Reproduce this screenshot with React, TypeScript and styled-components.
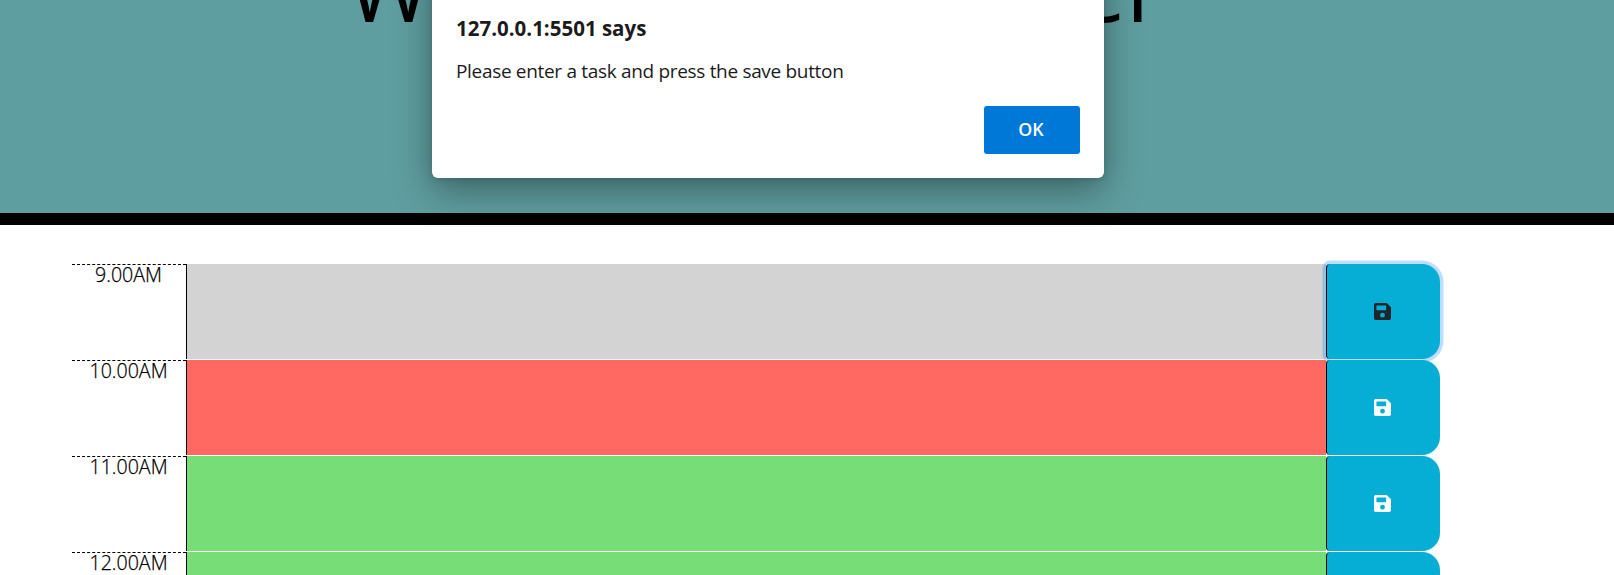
import React from "react";
import styled, { createGlobalStyle } from "styled-components";

const GlobalStyle = createGlobalStyle`
  *, *::before, *::after { box-sizing: border-box; }
  html, body { margin: 0; height: 100%; overflow: hidden; background: #fff; }
`;

const Page = styled.div`
  height: 575px;
  overflow: hidden;
  font-family: "Open Sans", "Noto Sans", sans-serif;
  color: #000;
`;

const Header = styled.header`
  display: flex;
  align-items: flex-end;
  height: 225px;
  padding: 0 0 188px 347px;
  overflow: hidden;
  background: #5f9ea0;
  border-bottom: 12px solid #000;
`;

const Title = styled.h1`
  margin: 0;
  font-size: 91px;
  font-weight: 400;
  line-height: 76px;
  word-spacing: -20px;
  white-space: nowrap;
`;

const Planner = styled.main`
  width: 1368px;
  margin: 39px 0 0 72px;
`;

const HourRow = styled.section`
  display: grid;
  grid-template-columns: 114px 1140px 114px;
  height: 96px;
`;

const Hour = styled.div`
  height: 96px;
  padding-right: 1px;
  border-top: 1px dashed #000;
  font-size: 19.6px;
  font-weight: 300;
  -webkit-text-stroke: 0.25px #000;
  line-height: 20px;
  text-align: center;
`;

const slotColors = { past: "#d3d3d3", present: "#ff6961", future: "#77dd77" };
type Phase = keyof typeof slotColors;

const Slot = styled.div<{ $phase: Phase }>`
  height: 95px;
  border-left: 1px solid #000;
  background: ${(p) => slotColors[p.$phase]};
`;

const SaveButton = styled.button<{ $focused: boolean }>`
  display: flex;
  align-items: center;
  justify-content: center;
  width: 114px;
  height: 95px;
  padding: 0 3px 0 0;
  border: 0;
  border-left: 1px solid #000;
  border-radius: 4px 18px 18px 4px;
  background: #06aed5;
  color: ${(p) => (p.$focused ? "#212529" : "#fff")};
  box-shadow: ${(p) => (p.$focused ? "0 0 0 3.5px rgba(0, 123, 255, 0.25)" : "none")};
`;

const Dialog = styled.div`
  position: absolute;
  top: -40px;
  left: 432px;
  display: flex;
  flex-direction: column;
  width: 672px;
  height: 218px;
  padding: 54px 24px 24px;
  border-radius: 6px;
  background: #fff;
  box-shadow: 0 12px 38px rgba(0, 0, 0, 0.38), 0 2px 6px rgba(0, 0, 0, 0.12);
  color: #1b1b1b;
`;

const DialogTitle = styled.h2`
  margin: 0;
  font-size: 20.5px;
  font-weight: 700;
  line-height: 28px;
  white-space: nowrap;
`;

const DialogText = styled.p`
  margin: 15px 0 0;
  font-size: 19px;
  letter-spacing: -0.32px;
  line-height: 28px;
  white-space: nowrap;
`;

const OkButton = styled.button`
  align-self: flex-end;
  width: 96px;
  height: 48px;
  margin-top: auto;
  padding: 0 2px 2px 0;
  border: 0;
  border-radius: 3px;
  background: #0078d7;
  color: #fff;
  font: 600 17.8px "Open Sans", "Noto Sans", sans-serif;
`;

const SaveIcon = () => (
  <svg width="17" height="17" viewBox="0 0 448 448" fill="currentColor" aria-hidden="true">
    <path
      fillRule="evenodd"
      d="M434 98 350 14A48 48 0 0 0 316 0H48A48 48 0 0 0 0 48V400A48 48 0 0 0 48 448H400A48 48 0 0 0 448 400V132A48 48 0 0 0 434 98ZM224 384A64 64 0 1 1 224 256A64 64 0 0 1 224 384ZM320 79V180A12 12 0 0 1 308 192H76A12 12 0 0 1 64 180V76A12 12 0 0 1 76 64H304A12 12 0 0 1 320 79Z"
    />
  </svg>
);

const hours: { label: string; phase: Phase; focused?: boolean }[] = [
  { label: "9.00AM", phase: "past", focused: true },
  { label: "10.00AM", phase: "present" },
  { label: "11.00AM", phase: "future" },
  { label: "12.00AM", phase: "future" },
];

export default function App() {
  return (
    <Page>
      <GlobalStyle />
      <Header>
        <Title>Work Day Scheduler</Title>
      </Header>
      <Planner>
        {hours.map((h) => (
          <HourRow key={h.label}>
            <Hour>{h.label}</Hour>
            <Slot $phase={h.phase} />
            <SaveButton $focused={!!h.focused} aria-label={`Save ${h.label}`}>
              <SaveIcon />
            </SaveButton>
          </HourRow>
        ))}
      </Planner>
      <Dialog role="alertdialog">
        <DialogTitle>127.0.0.1:5501 says</DialogTitle>
        <DialogText>Please enter a task and press the save button</DialogText>
        <OkButton>OK</OkButton>
      </Dialog>
    </Page>
  );
}
